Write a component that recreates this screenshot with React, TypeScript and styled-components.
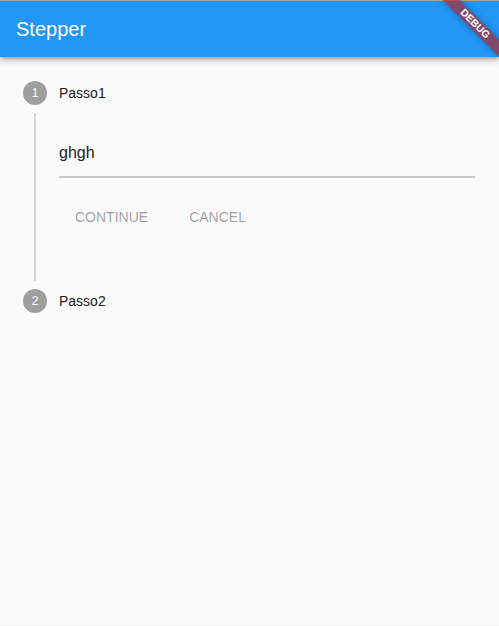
import React from "react";
import styled, { createGlobalStyle } from "styled-components";

const Global = createGlobalStyle`
  html, body { margin: 0; padding: 0; background: #fafafa; }
  body { font-family: "Liberation Sans", Arial, sans-serif; }
  * { box-sizing: border-box; }
`;

const Page = styled.div`
  position: relative;
  width: 499px;
  height: 626px;
  background: #fafafa;
  border-bottom: 1px solid #efefef;
  overflow: hidden;
  display: flex;
  flex-direction: column;
`;

const AppBar = styled.header`
  position: relative;
  z-index: 1;
  height: 57px;
  border-top: 1px solid #a8a8a8;
  background: #2196f3;
  color: #ffffff;
  display: flex;
  align-items: center;
  padding-left: 16px;
  box-shadow: 0 2px 4px -1px rgba(0, 0, 0, 0.2), 0 4px 5px 0 rgba(0, 0, 0, 0.14),
    0 1px 10px 0 rgba(0, 0, 0, 0.12);
`;

const Title = styled.h1`
  margin: 0;
  font-size: 20px;
  font-weight: 400;
  line-height: 56px;
`;

const Stepper = styled.main`
  padding-top: 24px;
  display: flex;
  flex-direction: column;
`;

const StepHeader = styled.div`
  height: 24px;
  display: flex;
  align-items: center;
  padding-left: 23px;
`;

const Circle = styled.div`
  width: 24px;
  height: 24px;
  border-radius: 50%;
  background: #9e9e9e;
  color: #ffffff;
  font-size: 12px;
  display: flex;
  align-items: center;
  justify-content: center;
`;

const StepTitle = styled.span`
  margin-left: 12px;
  font-size: 14px;
  color: #212121;
`;

const StepBody = styled.div`
  display: flex;
`;

const Rail = styled.div`
  width: 24px;
  margin-left: 23px;
  padding: 8px 0;
  display: flex;
  justify-content: center;
`;

const RailLine = styled.div`
  width: 2px;
  margin-left: -1px;
  background: #d6d6d6;
`;

const Content = styled.div`
  flex: 1;
  margin-left: 12px;
  margin-right: 24px;
  padding: 25px 0 48px;
  display: flex;
  flex-direction: column;
`;

const Field = styled.div`
  height: 48px;
  border-bottom: 2px solid #c8c8c8;
  font-size: 16px;
  color: #212121;
  padding-top: 13px;
  line-height: 19px;
`;

const Controls = styled.div`
  margin-top: 15px;
  height: 48px;
  display: flex;
  align-items: center;
`;

const FlatButton = styled.button<{ $gap?: boolean }>`
  height: 36px;
  min-width: 88px;
  padding: 0 16px;
  margin: 0 0 0 ${(p) => (p.$gap ? "9px" : "0")};
  border: none;
  background: transparent;
  font-family: "Liberation Sans", Arial, sans-serif;
  font-size: 14px;
  color: rgba(0, 0, 0, 0.38);
  text-transform: uppercase;
`;

const BannerWrap = styled.div`
  position: absolute;
  top: 0;
  right: 0;
  width: 80px;
  height: 80px;
  overflow: hidden;
  z-index: 5;
  pointer-events: none;
`;

const Banner = styled.div`
  position: absolute;
  top: 18px;
  right: -16px;
  width: 80px;
  height: 12px;
  transform: rotate(45deg);
  background: rgba(183, 28, 28, 0.63);
  box-shadow: 0 0 6px rgba(0, 0, 0, 0.3);
  color: #ffffff;
  font-family: "Liberation Sans", Arial, sans-serif;
  font-weight: 700;
  font-size: 10.2px;
  line-height: 12px;
  text-align: center;
`;

export default function App() {
  return (
    <>
      <Global />
      <Page>
        <AppBar>
          <Title>Stepper</Title>
        </AppBar>
        <Stepper>
          <StepHeader>
            <Circle>1</Circle>
            <StepTitle>Passo1</StepTitle>
          </StepHeader>
          <StepBody>
            <Rail>
              <RailLine />
            </Rail>
            <Content>
              <Field>ghgh</Field>
              <Controls>
                <FlatButton>Continue</FlatButton>
                <FlatButton $gap>Cancel</FlatButton>
              </Controls>
            </Content>
          </StepBody>
          <StepHeader>
            <Circle>2</Circle>
            <StepTitle>Passo2</StepTitle>
          </StepHeader>
        </Stepper>
        <BannerWrap>
          <Banner>DEBUG</Banner>
        </BannerWrap>
      </Page>
    </>
  );
}
